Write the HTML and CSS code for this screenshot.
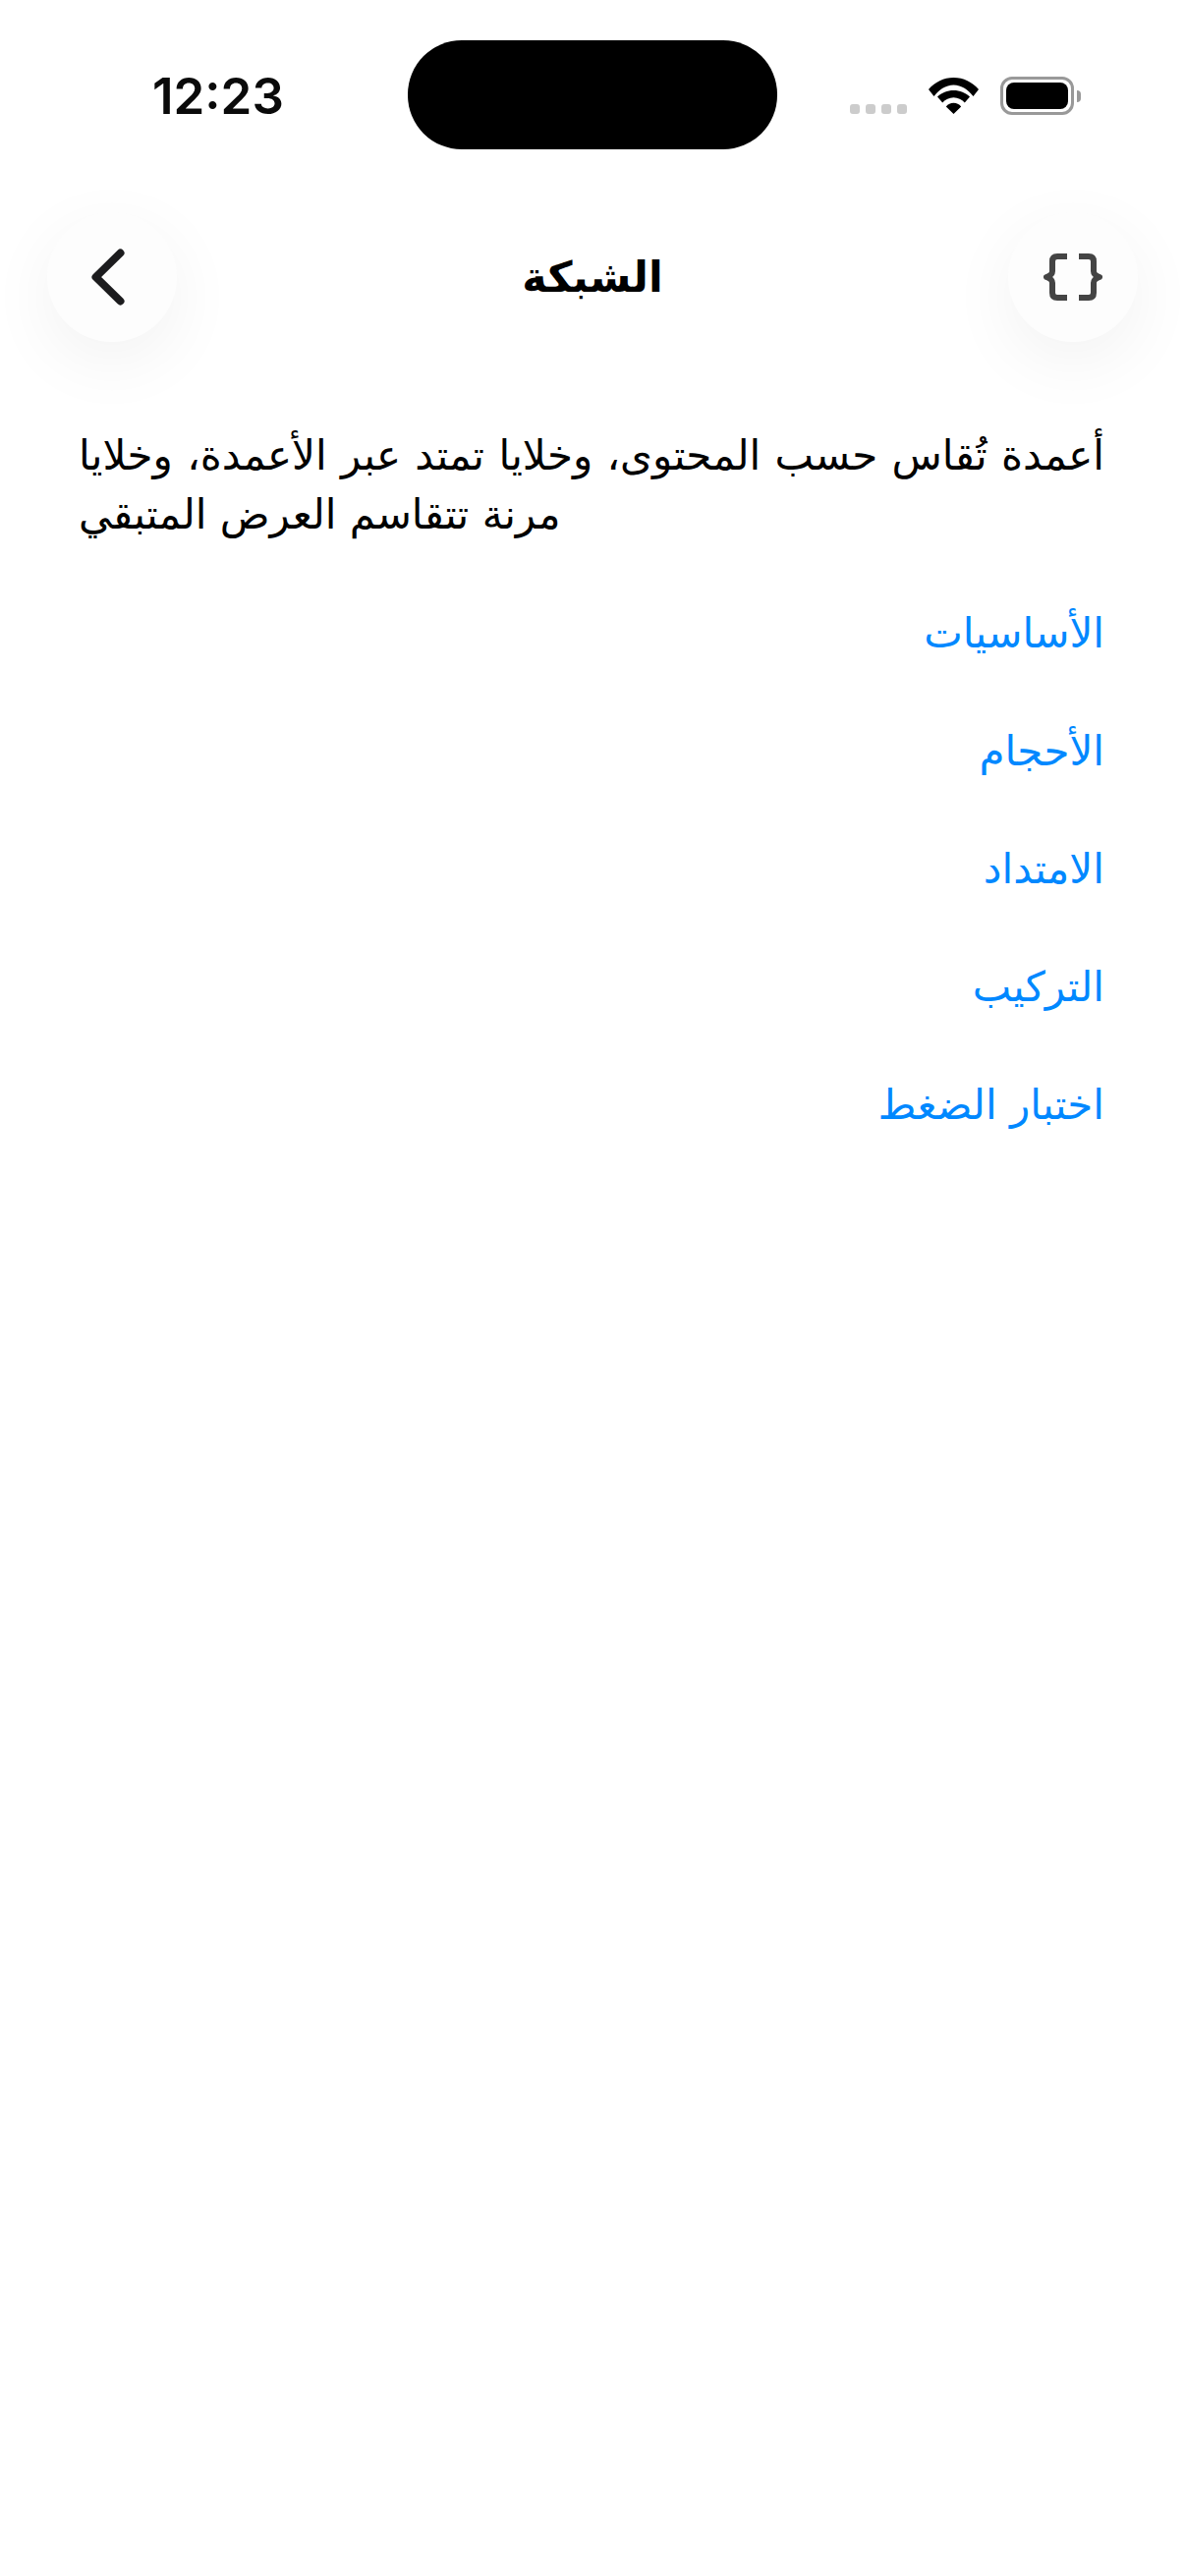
FILE: index.html
```html
<!DOCTYPE html>
<html lang="ar">
<head>
<meta charset="utf-8">
<title>الشبكة</title>
<link rel="stylesheet" href="styles.css">
</head>
<body>
<div class="screen">
  <div class="island"></div>
  <div class="statusbar">
    <span class="time">12:23</span>
    <div class="status-icons">
      <div class="signal"><i></i><i></i><i></i><i></i></div>
      <svg class="wifi" width="51" height="37" viewBox="0 0 51 37"><path d="M0 12C6.500 4.500 15.400 0 25.500 0S44.500 4.500 51 12L45.500 19C40.500 12.500 33.500 7.500 25.500 7.500S10.500 12.500 5.500 19Z M9 19.500C13.300 15.500 19.100 13 25.500 13S37.700 15.500 42 19.500L36.800 25.500C33.800 22.300 30 20.200 25.500 20.200S17.200 22.300 14.200 25.500Z M17.800 29.500C19.800 27 22.500 25.800 25.500 25.800S31.200 27 33.200 29.500L25.500 37Z"/></svg>
      <div class="battery"><div class="battery-body"><div class="battery-fill"></div></div><div class="battery-cap"></div></div>
    </div>
  </div>
  <header class="navbar">
    <button class="round-btn round-btn-back" aria-label="back">
      <svg width="34" height="58" viewBox="0 0 34 58"><path d="M29.500 4.500L4.500 29L29.500 53.500" fill="none" stroke="#1c1c1e" stroke-width="8" stroke-linecap="round" stroke-linejoin="round"/></svg>
    </button>
    <h1 class="title">الشبكة</h1>
    <button class="round-btn" aria-label="code">
      <svg width="60" height="50" viewBox="0 0 60 50"><path d="M24 4H14Q9 4 9 9V19Q9 23 3 25Q9 27 9 31V41Q9 46 14 46H24M36 4H46Q51 4 51 9V19Q51 23 57 25Q51 27 51 31V41Q51 46 46 46H36" fill="none" stroke="#444" stroke-width="6" stroke-linejoin="round"/></svg>
    </button>
  </header>
  <main class="content" dir="rtl">
    <p class="intro">أعمدة تُقاس حسب المحتوى، وخلايا تمتد عبر الأعمدة، وخلايا مرنة تتقاسم العرض المتبقي</p>
    <nav class="links">
      <a class="link">الأساسيات</a>
      <a class="link">الأحجام</a>
      <a class="link">الامتداد</a>
      <a class="link">التركيب</a>
      <a class="link">اختبار الضغط</a>
    </nav>
  </main>
</div>
</body>
</html>
```
FILE: styles.css
```css
* { box-sizing: border-box; }
html, body { margin: 0; padding: 0; background: #fff; }
body { font-family: "DejaVu Sans", sans-serif; color: #000; }
.screen { position: relative; width: 1206px; height: 2622px; overflow: hidden; background: #fff; }
.island { position: absolute; left: 415px; top: 41px; width: 376px; height: 111px; background: #000; border-radius: 55px; }
.statusbar { display: flex; justify-content: space-between; align-items: flex-start; height: 216px; padding: 68px 106px 0 155px; }
.time { font-family: Inter, sans-serif; font-weight: 600; font-size: 51px; line-height: 60px; color: #0a0a0a; }
.status-icons { display: flex; align-items: flex-end; height: 49px; padding-top: 10px; }
.signal { display: flex; gap: 6px; margin-right: 22px; margin-bottom: 1px; }
.signal i { display: block; width: 10px; height: 10px; border-radius: 3px; background: #ccc; }
.wifi { display: block; margin-right: 22px; margin-bottom: 1px; }
.battery { display: flex; align-items: center; }
.battery-body { width: 75px; height: 39px; border: 3px solid #999; border-radius: 12px; padding: 3px; }
.battery-fill { width: 100%; height: 100%; background: #000; border-radius: 8px; }
.battery-cap { width: 4px; height: 12px; margin-left: 3px; background: #999; border-radius: 0 6px 6px 0; }
.navbar { display: flex; justify-content: space-between; align-items: center; padding: 0 48px; height: 132px; }
.round-btn { display: flex; align-items: center; justify-content: center; width: 132px; height: 132px; padding: 0; border: 0; border-radius: 50%; background: #fdfdfd; box-shadow: 0 20px 70px rgba(0,0,0,.055); }
.round-btn-back { padding-right: 8px; }
.title { margin: 0; font-size: 43px; line-height: 60px; font-weight: 700; }
.content { padding: 86px 82px 0 80px; }
.intro { margin: 0; font-size: 42px; line-height: 60px; text-align: justify; text-align-last: left; }
.links { display: flex; flex-direction: column; margin-top: 31px; }
.link { display: block; height: 120px; font-size: 42px; line-height: 120px; color: #0088ff; }
```
